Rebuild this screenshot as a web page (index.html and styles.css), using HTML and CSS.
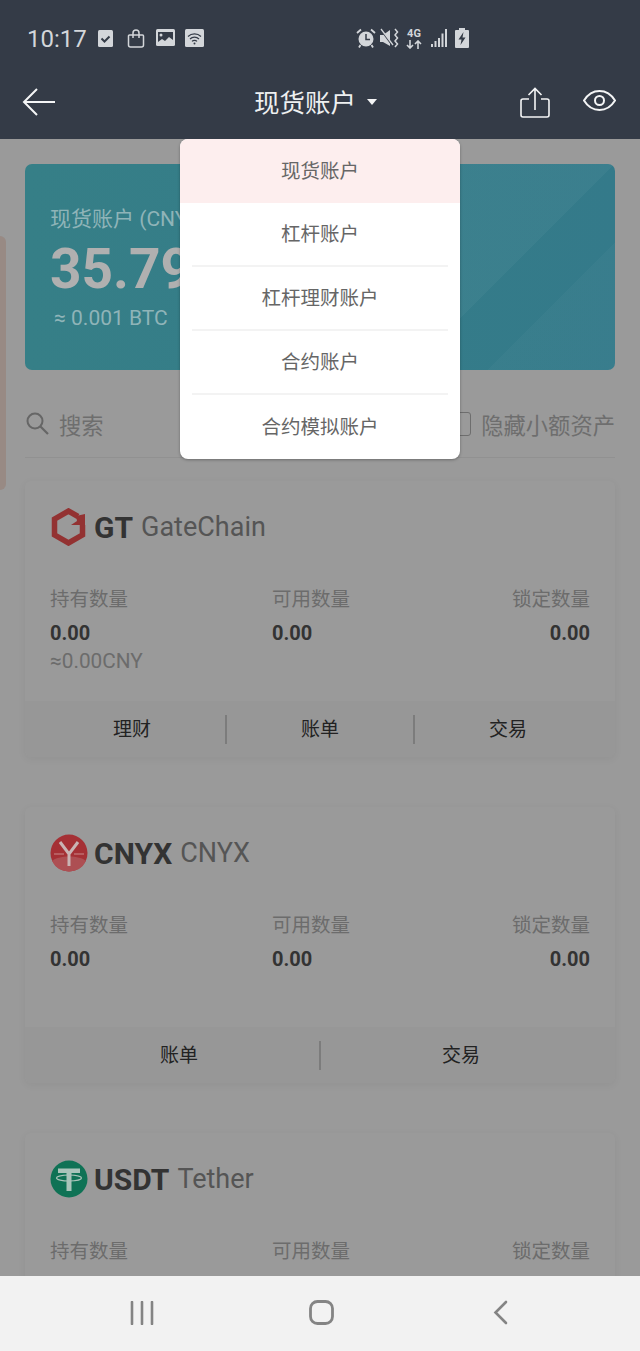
FILE: index.html
```html
<!DOCTYPE html>
<html lang="zh-CN">
<head>
  <meta charset="UTF-8" />
  <meta name="viewport" content="width=device-width, initial-scale=1.0"/>
  <title>现货账户</title>
  <link rel="stylesheet" href="styles.css">
</head>
<body>
  <div class="app">
    <header class="topbar">
      <div class="status">
        <span class="time">10:17</span>
        <svg class="st st-check" viewBox="0 0 15 17"><rect width="15" height="17" rx="1.5" fill="#d3d6da"/><path d="M3.5 8.5l3 3 5-5" fill="none" stroke="#343b47" stroke-width="2"/></svg>
        <svg class="st st-bag" viewBox="0 0 18 19"><path d="M2.5 6h13a1 1 0 0 1 1 1v9a2 2 0 0 1-2 2h-11a2 2 0 0 1-2-2V7a1 1 0 0 1 1-1z" fill="none" stroke="#d3d6da" stroke-width="1.5"/><path d="M6 9V4a3 3 0 0 1 6 0v5" fill="none" stroke="#d3d6da" stroke-width="1.5"/></svg>
        <svg class="st st-image" viewBox="0 0 19 18"><rect width="19" height="17" rx="1.5" fill="#d3d6da"/><path d="M2 3h15v8l-4-3-4 4-3-2-4 3z" fill="#343b47"/><circle cx="5" cy="6" r="1.5" fill="#d3d6da"/></svg>
        <svg class="st st-wifi" viewBox="0 0 19 18"><rect width="19" height="18" rx="1.5" fill="#d3d6da"/><path d="M3 7.5a9.5 9.5 0 0 1 13 0M5 10a6.500 6.500 0 0 1 9 0M7 12.400a3.500 3.500 0 0 1 5 0" fill="none" stroke="#343b47" stroke-width="1.200"/><circle cx="9.500" cy="14.500" r="1" fill="#343b47"/></svg>
        <span class="status-right">
          <svg class="st st-alarm" viewBox="0 0 20 20"><circle cx="10" cy="11" r="7.500" fill="#d3d6da"/><path d="M10 6v5.500h4" fill="none" stroke="#343b47" stroke-width="1.500"/><path d="M1 5l4-3.500M19 5l-4-3.500M4.500 17L3 19.500M15.500 17l1.500 2.500" stroke="#d3d6da" stroke-width="1.800"/></svg>
          <svg class="st st-mute" viewBox="0 0 20 20"><path d="M1 7h3l7-5v16l-7-4H1z" fill="#d3d6da"/><path d="M2 2l11 15" stroke="#343b47" stroke-width="1.500"/><path d="M2 1l12 16" stroke="#d3d6da" stroke-width="1.300"/><path d="M16 1l2.500 3-2.500 3 2.500 3-2.500 3 2.500 3-2.500 3" fill="none" stroke="#d3d6da" stroke-width="1.500"/></svg>
          <span class="net">4G
            <svg class="net-arrows" viewBox="0 0 16 9"><path d="M4 0v8M1 5l3 3 3-3M12 9V1M9 4l3-3 3 3" fill="none" stroke="#d3d6da" stroke-width="1.600"/></svg>
          </span>
          <svg class="st st-signal" viewBox="0 0 17 18"><path d="M1 18v-3M4.500 18v-6M8 18v-9M11.500 18V4.500M15 18V0" stroke="#d3d6da" stroke-width="2"/></svg>
          <svg class="st st-battery" viewBox="0 0 14 20"><path d="M4 0h6v2h3a1 1 0 0 1 1 1v16a1 1 0 0 1-1 1H1a1 1 0 0 1-1-1V3a1 1 0 0 1 1-1h3z" fill="#d3d6da"/><path d="M8.500 4L3.500 11.500h3L5.500 17l5-7.500h-3z" fill="#343b47"/></svg>
        </span>
      </div>
      <nav class="navbar">
        <span class="nav-left">
          <svg class="back" viewBox="0 0 34 28"><path d="M33 14H2M15 1L2 14l13 13" fill="none" stroke="#f4f5f6" stroke-width="2"/></svg>
        </span>
        <span class="nav-title">现货账户<i class="caret"></i></span>
        <span class="nav-right">
          <svg class="share" viewBox="0 0 30 31"><path d="M9 12H3a2 2 0 0 0-2 2v14a2 2 0 0 0 2 2h24a2 2 0 0 0 2-2V14a2 2 0 0 0-2-2h-6" fill="none" stroke="#f4f5f6" stroke-width="1.600"/><path d="M15 23V2M8.500 8L15 1.500 21.500 8" fill="none" stroke="#f4f5f6" stroke-width="1.600"/></svg>
          <svg class="eye" viewBox="0 0 33 21"><path d="M1 10.500C5 4 10 1 16.500 1S28 4 32 10.500C28 17 23 20 16.500 20S5 17 1 10.500z" fill="none" stroke="#f4f5f6" stroke-width="2"/><circle cx="16.500" cy="10.500" r="4.500" fill="none" stroke="#f4f5f6" stroke-width="2"/></svg>
        </span>
      </nav>
    </header>

    <main class="content">
      <div class="side-tab"></div>

      <section class="hero">
        <div class="hero-label">现货账户 (CNY)</div>
        <div class="hero-amount">35.79</div>
        <div class="hero-btc">≈ 0.001 BTC</div>
      </section>

      <div class="filter">
        <div class="search">
          <svg class="search-icon" viewBox="0 0 23 23"><circle cx="9" cy="9" r="7.500" fill="none" stroke="#666" stroke-width="2"/><path d="M14.500 14.500L22 22" stroke="#666" stroke-width="2.200"/></svg>
          搜索
        </div>
        <label class="hide-small"><i class="checkbox"></i>隐藏小额资产</label>
      </div>

      <article class="card">
        <div class="card-body">
          <h3 class="coin">
            <svg class="coin-logo" viewBox="0 0 36 38"><path d="M27 8.500L17.500 3 3.500 11v16l14 8 14-8V17" fill="none" stroke="#933232" stroke-width="5.500"/><path d="M34 6v11H20l6-4-1-5z" fill="#933232"/></svg>
            <b>GT</b><span>GateChain</span>
          </h3>
          <div class="stats">
            <div><p class="stat-label">持有数量</p><p class="stat-value">0.00</p><p class="stat-cny">≈0.00CNY</p></div>
            <div><p class="stat-label">可用数量</p><p class="stat-value">0.00</p></div>
            <div class="stat-end"><p class="stat-label">锁定数量</p><p class="stat-value">0.00</p></div>
          </div>
        </div>
        <div class="card-actions">
          <a>理财</a><a>账单</a><a>交易</a>
        </div>
      </article>

      <article class="card">
        <div class="card-body">
          <h3 class="coin">
            <svg class="coin-logo" viewBox="0 0 38 38"><circle cx="19" cy="19" r="18.500" fill="#a53035"/><path d="M2 27a19 19 0 0 0 34 0c-6-6-28-6-34 0z" fill="#ad4f53"/><path d="M10 8l9 12 9-12M19 20v12" fill="none" stroke="#c9b4b4" stroke-width="3"/><path d="M4 20h10M24 20h10" stroke="#c98a8c" stroke-width="1"/></svg>
            <b>CNYX</b><span>CNYX</span>
          </h3>
          <div class="stats">
            <div><p class="stat-label">持有数量</p><p class="stat-value">0.00</p></div>
            <div><p class="stat-label">可用数量</p><p class="stat-value">0.00</p></div>
            <div class="stat-end"><p class="stat-label">锁定数量</p><p class="stat-value">0.00</p></div>
          </div>
        </div>
        <div class="card-actions">
          <a>账单</a><a>交易</a>
        </div>
      </article>

      <article class="card">
        <div class="card-body">
          <h3 class="coin">
            <svg class="coin-logo" viewBox="0 0 38 38"><circle cx="19" cy="19" r="18.500" fill="#0f7255"/><path d="M8 8.500h22v4.500h-8.500v18h-5V13H8z" fill="#a9c4ba"/><ellipse cx="19" cy="18" rx="12.500" ry="3" fill="none" stroke="#a9c4ba" stroke-width="1.200"/></svg>
            <b>USDT</b><span>Tether</span>
          </h3>
          <div class="stats">
            <p class="stat-label">持有数量</p>
            <p class="stat-label">可用数量</p>
            <p class="stat-label stat-end">锁定数量</p>
          </div>
        </div>
      </article>

      <ul class="account-menu">
        <li class="active">现货账户</li>
        <li>杠杆账户</li>
        <li>杠杆理财账户</li>
        <li>合约账户</li>
        <li>合约模拟账户</li>
      </ul>
    </main>

    <footer class="softkeys">
      <svg class="key-recent" viewBox="0 0 24 24"><path d="M2 1v22M12 1v22M22 1v22" stroke="#848484" stroke-width="2.600" stroke-linecap="round"/></svg>
      <svg class="key-home" viewBox="0 0 25 25"><rect x="1.500" y="1.500" width="22" height="22" rx="7" fill="none" stroke="#848484" stroke-width="2.800"/></svg>
      <svg class="key-back" viewBox="0 0 15 25"><path d="M13 2L2.500 12.500 13 23" fill="none" stroke="#848484" stroke-width="2.600" stroke-linecap="round"/></svg>
    </footer>
  </div>
</body>
</html>
```

FILE: styles.css
```css
* {
  box-sizing: border-box;
}

body {
  margin: 0;
  font-family: Roboto, "Noto Sans CJK SC", sans-serif;
  background-color: #9a9a9a;
}

p {
  margin: 0;
}

.app {
  width: 640px;
  height: 1351px;
  display: flex;
  flex-direction: column;
  overflow: hidden;
}

/* top bar */
.topbar {
  height: 139px;
  flex: none;
  background-color: #343b47;
}

.status {
  height: 76px;
  padding: 0 171px 0 27px;
  display: flex;
  align-items: center;
}

.time {
  width: 71px;
  margin-top: 1px;
  font-size: 24px;
  color: #d3d6da;
}

.st {
  display: block;
  flex: none;
}

.st-check { width: 15px; height: 17px; }
.st-bag { width: 18px; height: 19px; margin-left: 14px; }
.st-image { width: 19px; height: 18px; margin-left: 11px; }
.st-wifi { width: 19px; height: 18px; margin-left: 10px; }

.status-right {
  margin-left: auto;
  display: flex;
  align-items: center;
}

.st-alarm { width: 20px; height: 20px; }
.st-mute { width: 20px; height: 20px; margin-left: 3px; }
.st-signal { width: 17px; height: 18px; margin-left: 9px; }
.st-battery { width: 14px; height: 20px; margin-left: 7px; }

.net {
  width: 16px;
  margin-left: 7px;
  font-size: 11px;
  font-weight: 700;
  line-height: 11px;
  text-align: center;
  color: #d3d6da;
}

.net-arrows {
  display: block;
  width: 16px;
  height: 9px;
  margin-top: 1px;
}

.navbar {
  height: 63px;
  padding: 0 24px 11px 22px;
  display: flex;
  align-items: center;
}

.nav-left {
  width: 232px;
}

.back {
  display: block;
  width: 34px;
  height: 28px;
}

.nav-title {
  margin-top: -4px;
  display: flex;
  align-items: center;
  font-size: 25.500px;
  color: #eef0f1;
}

.caret {
  width: 0;
  height: 0;
  margin-left: 11px;
  margin-top: 4px;
  border-left: 5px solid transparent;
  border-right: 5px solid transparent;
  border-top: 6px solid #f4f5f6;
}

.nav-right {
  margin-left: auto;
  display: flex;
  align-items: center;
  gap: 33px;
}

.share {
  width: 30px;
  height: 31px;
}

.eye {
  width: 33px;
  height: 21px;
  margin-top: -3px;
}

/* page content */
.content {
  position: relative;
  flex: 1;
  min-height: 0;
  padding: 25px 25px 0;
  overflow: hidden;
}

.side-tab {
  position: absolute;
  left: 0;
  top: 97px;
  width: 6px;
  height: 254px;
  border-radius: 0 6px 6px 0;
  background-color: #988a84;
}

.hero {
  height: 206px;
  padding: 40px 25px 0;
  border-radius: 7px;
  color: #8fb4b8;
  background:
    linear-gradient(135deg, transparent 52%, rgba(255, 255, 255, 0.035) 52%, rgba(255, 255, 255, 0.035) 74%, transparent 74%),
    linear-gradient(135deg, transparent 84%, rgba(255, 255, 255, 0.025) 84%),
    linear-gradient(90deg, #367f87, #347a8a);
}

.hero-label {
  font-size: 21px;
  line-height: 30px;
}

.hero-amount {
  margin-top: 6px;
  font-size: 55px;
  font-weight: 700;
  line-height: 58px;
  color: #b0b0b0;
}

.hero-btc {
  margin-top: 8px;
  padding-left: 4px;
  font-size: 21px;
  line-height: 24px;
}

.filter {
  height: 88px;
  padding: 39px 0 19px;
  display: flex;
  align-items: center;
  justify-content: space-between;
  border-bottom: 1px solid #919191;
  font-size: 22.300px;
  color: #6e6e6e;
}

.search {
  display: flex;
  align-items: center;
  gap: 10px;
  padding-left: 1px;
}

.search-icon {
  width: 23px;
  height: 23px;
}

.hide-small {
  display: flex;
  align-items: center;
  gap: 10px;
}

.checkbox {
  width: 23px;
  height: 24px;
  border: 1.500px solid #6e6e6e;
  border-radius: 3px;
}

.card {
  height: 276px;
  margin-top: 23px;
  margin-bottom: 50px;
  border-radius: 6px;
  box-shadow: 0 2px 8px rgba(0, 0, 0, 0.05);
}

.card + .card {
  margin-top: 0;
}

.card-body {
  height: 220px;
  padding: 27px 25px 0;
}

.coin {
  height: 38px;
  margin: 0;
  display: flex;
  align-items: center;
  font-weight: 400;
}

.coin-logo {
  width: 38px;
  height: 38px;
  flex: none;
}

.coin b {
  margin-left: 6px;
  font-size: 30px;
  color: #333;
}

.coin span {
  margin-left: 8px;
  font-size: 27px;
  color: #555;
}

.stats {
  margin-top: 39px;
  display: grid;
  grid-template-columns: 222px 1fr 1fr;
}

.stat-end {
  text-align: right;
}

.stat-label {
  font-size: 19.500px;
  line-height: 30px;
  color: #6c6c6c;
}

.stat-value {
  margin-top: 4px;
  font-size: 20px;
  font-weight: 700;
  line-height: 28px;
  color: #333;
}

.stat-cny {
  font-size: 20.800px;
  line-height: 28px;
  color: #6c6c6c;
}

.card-actions {
  height: 56px;
  padding: 0 14px;
  display: flex;
  align-items: center;
  background-color: #979797;
  border-radius: 0 0 6px 6px;
}

.card-actions a {
  flex: 1;
  padding-top: 1px;
  line-height: 28px;
  text-align: center;
  font-size: 19px;
  color: #222;
}

.card-actions a + a {
  border-left: 2px solid #7c7c7c;
}

/* dropdown */
.account-menu {
  position: absolute;
  left: 180px;
  top: 0;
  width: 280px;
  margin: 0;
  padding: 0;
  list-style: none;
  overflow: hidden;
  background-color: #fff;
  border-radius: 8px;
  box-shadow: 0 1px 3px rgba(0, 0, 0, 0.3);
}

.account-menu li {
  height: 64px;
  margin: 0 12px;
  padding-bottom: 3px;
  display: flex;
  align-items: center;
  justify-content: center;
  font-size: 19.500px;
  color: #666;
  border-bottom: 2px solid #f3f3f3;
}

.account-menu li:last-child {
  border-bottom: none;
}

.account-menu li.active {
  margin: 0;
  background-color: #fdeeee;
  border-bottom: none;
}

/* android nav keys */
.softkeys {
  height: 75px;
  flex: none;
  padding-bottom: 2px;
  display: flex;
  align-items: center;
  background-color: #f2f2f2;
}

.key-recent {
  width: 24px;
  height: 24px;
  margin-left: 130px;
}

.key-home {
  width: 25px;
  height: 25px;
  margin-left: 155px;
}

.key-back {
  width: 15px;
  height: 25px;
  margin-left: 159px;
}
```
